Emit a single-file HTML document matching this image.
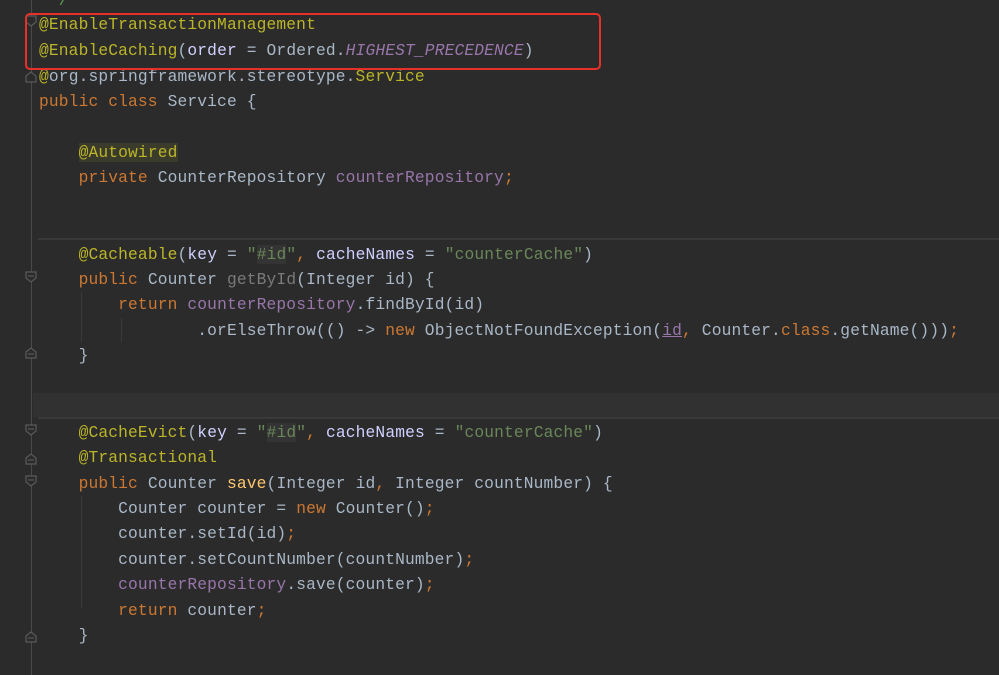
<!DOCTYPE html>
<html><head><meta charset="utf-8"><style>
html,body{margin:0;padding:0;}
body{width:999px;height:675px;background:#2b2b2b;position:relative;overflow:hidden;font-family:"Liberation Mono",monospace;font-size:16.25px;color:#a9b7c6;letter-spacing:0.14px;}
.l{position:absolute;left:39px;height:25px;line-height:25px;white-space:pre;margin-top:1px;}
.a{color:#bbb529}.k{color:#cc7832}.f{color:#9876aa}.s{color:#6a8759}.m{color:#ffc66d}.p{color:#d0d0ff}.g{color:#7a7a7a}
.it{font-style:italic}
.hl{background:#3b3b2c}
.hs{background:#343434}
.u{text-decoration:underline;}
.gl{position:absolute;left:31px;top:0;width:1px;height:675px;background:#4a4a4a}
.sep{position:absolute;left:38px;right:0;height:2px;background:#393939}
</style></head><body>
<div style="position:absolute;left:33px;right:0;top:393px;height:24px;background:#313131"></div>
<div class="gl"></div>
<div class="sep" style="top:238px"></div>
<div class="sep" style="top:417px"></div>
<div class="l" style="top:-13px;color:#629755"> */</div>
<div class="l" style="top:11px"><span class="a">@EnableTransactionManagement</span></div>
<div class="l" style="top:37px"><span class="a">@EnableCaching</span>(<span class="p">order</span> = Ordered.<span class="f it">HIGHEST_PRECEDENCE</span>)</div>
<div class="l" style="top:63px"><span class="a">@</span>org.springframework.stereotype.<span class="a">Service</span></div>
<div class="l" style="top:88px"><span class="k">public class </span>Service {</div>
<div class="l" style="top:139px">    <span class="a hl">@Autowired</span></div>
<div class="l" style="top:164px">    <span class="k">private </span>CounterRepository <span class="f">counterRepository</span><span class="k">;</span></div>
<div class="l" style="top:241px">    <span class="a">@Cacheable</span>(<span class="p">key</span> = <span class="s">"<span class="hs">#id</span>"</span><span class="k">, </span><span class="p">cacheNames</span> = <span class="s">"counterCache"</span>)</div>
<div class="l" style="top:266px">    <span class="k">public </span>Counter <span class="g">getById</span>(Integer id) {</div>
<div class="l" style="top:291px">        <span class="k">return </span><span class="f">counterRepository</span>.findById(id)</div>
<div class="l" style="top:317px">                .orElseThrow(() -> <span class="k">new </span>ObjectNotFoundException(<span class="f u">id</span><span class="k">, </span>Counter.<span class="k">class</span>.getName()))<span class="k">;</span></div>
<div class="l" style="top:342px">    }</div>
<div class="l" style="top:419px">    <span class="a">@CacheEvict</span>(<span class="p">key</span> = <span class="s">"<span class="hs">#id</span>"</span><span class="k">, </span><span class="p">cacheNames</span> = <span class="s">"counterCache"</span>)</div>
<div class="l" style="top:444px">    <span class="a">@Transactional</span></div>
<div class="l" style="top:470px">    <span class="k">public </span>Counter <span class="m">save</span>(Integer id<span class="k">, </span>Integer countNumber) {</div>
<div class="l" style="top:495px">        Counter counter = <span class="k">new </span>Counter()<span class="k">;</span></div>
<div class="l" style="top:520px">        counter.setId(id)<span class="k">;</span></div>
<div class="l" style="top:546px">        counter.setCountNumber(countNumber)<span class="k">;</span></div>
<div class="l" style="top:571px">        <span class="f">counterRepository</span>.save(counter)<span class="k">;</span></div>
<div class="l" style="top:597px">        <span class="k">return </span>counter<span class="k">;</span></div>
<div class="l" style="top:622px">    }</div>
<div style="position:absolute;left:81px;top:292px;width:1px;height:50px;background:#3a3a3a"></div>
<div style="position:absolute;left:121px;top:318px;width:1px;height:24px;background:#3a3a3a"></div>
<div style="position:absolute;left:81px;top:496px;width:1px;height:112px;background:#3a3a3a"></div>
<svg width="40" height="675" style="position:absolute;left:0;top:0" fill="#2b2b2b" stroke="#5a5a5a" stroke-width="1.2">
<path d="M26 16h10v6l-5 4l-5-4z"/><path d="M26 76l5-4l5 4v6h-10z"/>
<path d="M26 272h10v6l-5 4l-5-4z"/><path d="M28 276h6"/>
<path d="M26 352l5-4l5 4v6h-10z"/><path d="M28 354h6"/>
<path d="M26 425h10v6l-5 4l-5-4z"/><path d="M28 429h6"/>
<path d="M26 458l5-4l5 4v6h-10z"/><path d="M28 460h6"/>
<path d="M26 476h10v6l-5 4l-5-4z"/><path d="M28 480h6"/>
<path d="M26 636l5-4l5 4v6h-10z"/><path d="M28 638h6"/>
</svg>
<div style="position:absolute;left:25px;top:13px;width:572px;height:53px;border:2px solid #e8302a;border-radius:5px"></div>
</body></html>
